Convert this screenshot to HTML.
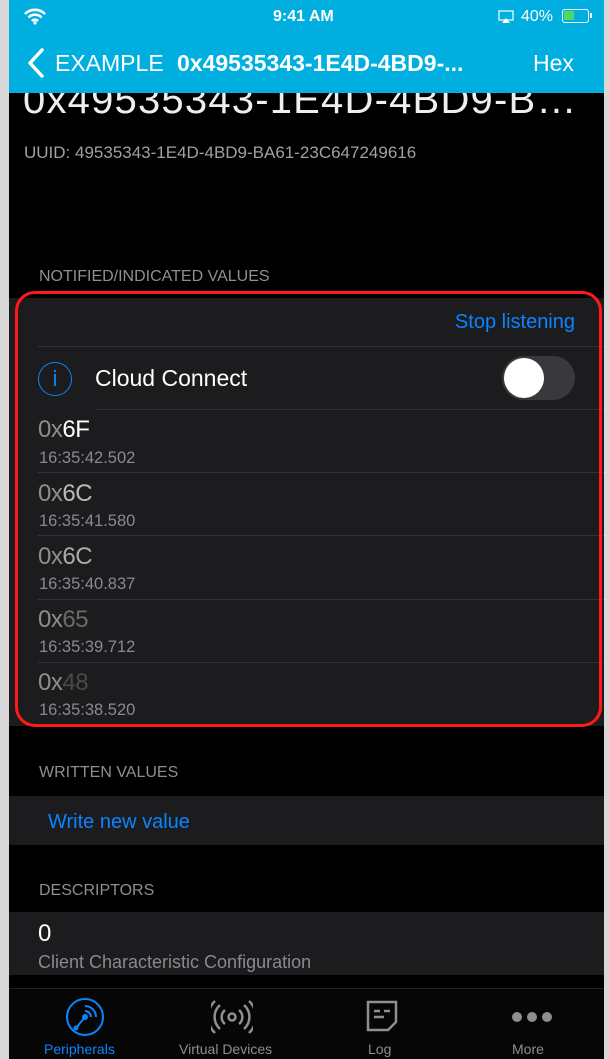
<!DOCTYPE html>
<html><head><meta charset="utf-8"><style>
*{margin:0;padding:0;box-sizing:border-box}
body{width:609px;height:1059px;background:#d8d8d8;font-family:"Liberation Sans",sans-serif;overflow:hidden;position:relative}
.phone{position:absolute;left:9px;top:0;width:595px;height:1059px;background:#000;overflow:hidden}
.abs{position:absolute}
.nav{left:0;top:0;width:595px;height:93px;background:#00afe0;color:#fff}
.card{left:0;width:595px;background:#1c1c1e}
.sep{position:absolute;height:1px;background:#333336;right:0}
.hdr{color:#8e8e93;font-size:16px;left:30px}
.val{font-size:24px;color:#8e8e8e;left:29px;letter-spacing:-0.5px}
.ts{font-size:16.5px;color:#8a8a8e;left:30px}
</style></head><body>
<div class="phone">
 <div class="abs" style="top:78px;color:#eee;font-size:40px;left:14px;white-space:nowrap;letter-spacing:1.2px">0x49535343-1E4D-4BD9-B…</div>
 <div class="abs" style="left:15px;top:143px;color:#a0a0a5;font-size:17px">UUID: 49535343-1E4D-4BD9-BA61-23C647249616</div>
 <div class="nav abs">
  <svg class="abs" style="left:14px;top:7px" width="24" height="18" viewBox="0 0 24 18"><path d="M2 7a14 14 0 0 1 20 0M5.5 10.5a9 9 0 0 1 13 0M9 14a4 4 0 0 1 6 0" stroke="#fff" stroke-width="2.6" fill="none"/><circle cx="12" cy="16" r="1.6" fill="#fff"/></svg>
  <div class="abs" style="left:264px;top:8px;font-size:16px;font-weight:bold">9:41 AM</div>
  <svg class="abs" style="left:489px;top:10px" width="16" height="14"><rect x="1" y="1" width="14" height="9" fill="none" stroke="#fff" stroke-width="1.2"/><path d="M4 13h8l-4-5z" fill="#fff"/></svg>
  <div class="abs" style="left:512px;top:8px;font-size:16px">40%</div>
  <div class="abs" style="left:553px;top:9px;width:27px;height:14px;border:1.5px solid #fff;border-radius:3px"><div style="width:10px;height:9px;margin:1px;background:#4cd964"></div></div>
  <div class="abs" style="left:581px;top:13px;width:2px;height:5px;background:#fff"></div>
  <svg class="abs" style="left:17px;top:47px" width="20" height="32"><path d="M16 3L4 16l12 13" stroke="#fff" stroke-width="3.5" fill="none" stroke-linecap="round" stroke-linejoin="round"/></svg>
  <div class="abs" style="left:46px;top:50px;font-size:23px">EXAMPLE</div>
  <div class="abs" style="left:168px;top:50px;font-size:23px;font-weight:bold">0x49535343-1E4D-4BD9-...</div>
  <div class="abs" style="left:524px;top:50px;font-size:23px">Hex</div>
 </div>

 <div class="abs hdr" style="top:268px">NOTIFIED/INDICATED VALUES</div>
 <div class="abs card" style="top:298px;height:428px">
  <div class="abs" style="right:29px;top:13px;color:#0a84ff;font-size:20px">Stop listening</div>
  <div class="sep" style="left:29px;top:48px"></div>
  <div class="abs" style="left:29px;top:64px;width:34px;height:34px;border:1.5px solid #0a84ff;border-radius:50%;color:#0a84ff;text-align:center;font-size:22px;line-height:31px">i</div>
  <div class="abs" style="left:86px;top:67px;color:#fff;font-size:23px">Cloud Connect</div>
  <div class="abs" style="left:493px;top:58px;width:73px;height:44px;border-radius:22px;background:#39393d"><div style="width:40px;height:40px;margin:2px;border-radius:50%;background:#fff"></div></div>
  <div class="sep" style="left:86px;top:111px"></div>
  <div class="abs val" style="top:118px">0x<span style="color:#fff">6F</span></div><div class="abs ts" style="top:151px">16:35:42.502</div>
  <div class="sep" style="left:29px;top:174px"></div>
  <div class="abs val" style="top:182px">0x<span style="color:#bbb">6C</span></div><div class="abs ts" style="top:214px">16:35:41.580</div>
  <div class="sep" style="left:29px;top:237px"></div>
  <div class="abs val" style="top:245px">0x<span style="color:#aaa">6C</span></div><div class="abs ts" style="top:277px">16:35:40.837</div>
  <div class="sep" style="left:29px;top:301px"></div>
  <div class="abs val" style="top:308px">0x<span style="color:#6a6a6a">65</span></div><div class="abs ts" style="top:340px">16:35:39.712</div>
  <div class="sep" style="left:29px;top:364px"></div>
  <div class="abs val" style="top:371px">0x<span style="color:#4a4a4a">48</span></div><div class="abs ts" style="top:403px">16:35:38.520</div>
 </div>
 <div class="abs" style="left:6px;top:291px;width:587px;height:436px;border:3px solid #ff1a1a;border-radius:20px"></div>

 <div class="abs hdr" style="top:764px">WRITTEN VALUES</div>
 <div class="abs card" style="top:796px;height:49px"><div class="abs" style="left:39px;top:15px;color:#0a84ff;font-size:20px">Write new value</div></div>
 <div class="abs hdr" style="top:882px">DESCRIPTORS</div>
 <div class="abs card" style="top:912px;height:63px">
  <div class="abs" style="left:29px;top:8px;color:#fff;font-size:24px">0</div>
  <div class="abs" style="left:29px;top:40px;color:#8a8a8e;font-size:18px">Client Characteristic Configuration</div>
 </div>

 <div class="abs" style="left:0;top:988px;width:595px;height:71px;background:#060606;border-top:1px solid #222">
  <svg class="abs" style="left:56px;top:8px" width="40" height="40" viewBox="0 0 40 40" fill="none" stroke="#0a84ff" stroke-width="2"><circle cx="20" cy="20" r="18"/><path d="M20 9a11 11 0 0 1 11 11M20 14a6 6 0 0 1 6 6M20 20L11 31"/><circle cx="20" cy="20" r="2" fill="#0a84ff"/><circle cx="11" cy="31" r="1.5" fill="#0a84ff"/></svg>
  <div class="abs" style="left:35px;top:52px;color:#0a84ff;font-size:14px">Peripherals</div>
  <svg class="abs" style="left:202px;top:10px" width="42" height="36" viewBox="0 0 42 36" fill="none" stroke="#8e8e93" stroke-width="2.5"><circle cx="21" cy="18" r="3.5"/><path d="M14 11a9 9 0 0 0 0 14M28 11a9 9 0 0 1 0 14M9 6a16 16 0 0 0 0 24M33 6a16 16 0 0 1 0 24M4 2a22 22 0 0 0 0 32M38 2a22 22 0 0 1 0 32"/></svg>
  <div class="abs" style="left:170px;top:52px;color:#8e8e93;font-size:14px">Virtual Devices</div>
  <svg class="abs" style="left:356px;top:10px" width="34" height="34" viewBox="0 0 34 34" fill="none" stroke="#8e8e93" stroke-width="2.5"><path d="M3 3h28v20l-8 8H3z"/><path d="M9 12h6M19 12h6M9 18h10"/></svg>
  <div class="abs" style="left:359px;top:52px;color:#8e8e93;font-size:14px">Log</div>
  <div class="abs" style="left:503px;top:20px;color:#8e8e93;font-size:14px;letter-spacing:1px">
   <span style="display:inline-block;width:10px;height:10px;border-radius:50%;background:#8e8e93"></span>
   <span style="display:inline-block;width:10px;height:10px;border-radius:50%;background:#8e8e93"></span>
   <span style="display:inline-block;width:10px;height:10px;border-radius:50%;background:#8e8e93"></span></div>
  <div class="abs" style="left:503px;top:52px;color:#8e8e93;font-size:14px">More</div>
 </div>
</div>
</body></html>
